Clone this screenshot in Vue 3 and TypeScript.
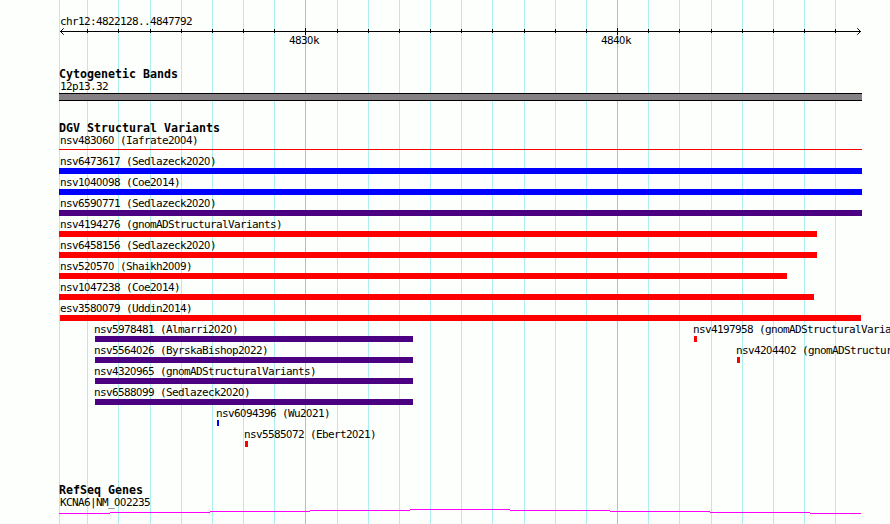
<script setup lang="ts">
interface Feature {
  label: string
  start: number
  end: number
  text: number
  kind: 'gain' | 'loss' | 'mixed' | 'thin'
}

const gridLines: number[] = [
  59, 87, 118, 150, 181, 212, 243, 274, 305, 337, 368, 399, 430, 461, 492,
  524, 555, 586, 617, 648, 679, 711, 742, 773, 804, 835,
]
const majorLines: number[] = [305, 617]
const ticks = gridLines.slice(1)

const isMajor = (x: number): boolean => majorLines.includes(x)
const tickPath = (x: number): string =>
  isMajor(x) ? `M${x + 0.5} 4v7` : `M${x + 0.5} 5v4`

const feature = (
  label: string, start: number, end: number, text: number, kind: Feature['kind'],
): Feature => ({ label, start, end, text, kind })

const rows: Feature[][] = [
  [feature('nsv483060 (Iafrate2004)', 59, 862, 60, 'thin')],
  [feature('nsv6473617 (Sedlazeck2020)', 59, 862, 60, 'gain')],
  [feature('nsv1040098 (Coe2014)', 59, 862, 60, 'gain')],
  [feature('nsv6590771 (Sedlazeck2020)', 59, 862, 60, 'mixed')],
  [feature('nsv4194276 (gnomADStructuralVariants)', 59, 817, 60, 'loss')],
  [feature('nsv6458156 (Sedlazeck2020)', 59, 817, 60, 'loss')],
  [feature('nsv520570 (Shaikh2009)', 59, 787, 60, 'loss')],
  [feature('nsv1047238 (Coe2014)', 59, 814, 60, 'loss')],
  [feature('esv3580079 (Uddin2014)', 60, 861, 60, 'loss')],
  [
    feature('nsv5978481 (Almarri2020)', 95, 413, 94, 'mixed'),
    feature('nsv4197958 (gnomADStructuralVariants)', 694, 697, 693, 'loss'),
  ],
  [
    feature('nsv5564026 (ByrskaBishop2022)', 95, 413, 94, 'mixed'),
    feature('nsv4204402 (gnomADStructuralVariants)', 737, 740, 736, 'loss'),
  ],
  [feature('nsv4320965 (gnomADStructuralVariants)', 95, 413, 94, 'mixed')],
  [feature('nsv6588099 (Sedlazeck2020)', 95, 413, 94, 'mixed')],
  [feature('nsv6094396 (Wu2021)', 217, 219, 216, 'gain')],
  [feature('nsv5585072 (Ebert2021)', 245, 248, 244, 'loss')],
]

// Zeros are set in a face without a dot or slash.
const parts = (s: string): string[] => s.split(/(0)/).filter(Boolean)
</script>

<template>
  <main class="browser">
    <svg class="grid" width="890" height="524" shape-rendering="crispEdges" aria-hidden="true">
      <rect
        v-for="x in gridLines" :key="x" :x="x" y="0" width="1" height="524"
        :class="isMajor(x) ? 'major' : 'minor'"
      />
    </svg>

    <section class="ruler">
      <div class="label">chr12:4822128..4847792</div>
      <svg class="axis" width="890" height="12" aria-hidden="true">
        <g shape-rendering="crispEdges">
          <path d="M60 7.5H861" />
          <path v-for="x in ticks" :key="x" :d="tickPath(x)" />
        </g>
        <path d="M63.7 4.3L60.5 7.5L63.7 10.7M857.3 4.3L860.5 7.5L857.3 10.7" />
      </svg>
      <div class="scale">
        <div class="label">483<span class="zero">0</span>k</div>
        <div class="label">484<span class="zero">0</span>k</div>
      </div>
    </section>

    <section class="bands">
      <h2>Cytogenetic Bands</h2>
      <div class="label">12p13.32</div>
      <div class="band"></div>
    </section>

    <section class="variants">
      <h2>DGV Structural Variants</h2>
      <div v-for="(row, r) in rows" :key="r" class="row">
        <div v-for="f in row" :key="f.label" class="feature">
          <div class="label" :style="{ marginLeft: f.text + 'px' }"><template v-for="(p, i) in parts(f.label)" :key="i"><span v-if="p === '0'" class="zero">0</span><template v-else>{{ p }}</template></template></div>
          <div
            class="bar" :class="f.kind"
            :style="{ marginLeft: f.start + 'px', width: f.end - f.start + 'px' }"
          ></div>
        </div>
      </div>
    </section>

    <section class="genes">
      <h2>RefSeq Genes</h2>
      <div class="label">KCNA6|NM_<span class="zero">0</span><span class="zero">0</span>2235</div>
      <svg class="gene" width="890" height="8" shape-rendering="crispEdges" aria-hidden="true">
        <path d="M59 5.5H110M110 4.5H210M210 3.5H310M310 2.5H410M410 1.5H510M510 2.5H610M610 3.5H710M710 4.5H810M810 5.5H861" />
      </svg>
    </section>
  </main>
</template>

<style>
body {
  margin: 0;
  background: #fdfffc;
}
</style>

<style scoped>
.browser {
  position: relative;
  width: 890px;
  height: 524px;
  overflow: hidden;
  background: #fdfffc;
  color: #000;
}

.grid {
  position: absolute;
  inset: 0;
}

.minor { fill: #afeeee; }
.major { fill: #87ceeb; }

section {
  position: relative;
  box-sizing: border-box;
}

svg { display: block; }

h2 {
  margin: 0 0 0 59px;
  height: 13px;
  font: bold 11.63px/13px "DejaVu Sans Mono", monospace;
  white-space: pre;
}

.label {
  margin-left: 60px;
  height: 13px;
  font: 11px/13px "DejaVu Sans Mono", monospace;
  letter-spacing: -0.622px;
  white-space: pre;
}

.zero {
  display: inline-block;
  width: 6px;
  height: 13px;
  vertical-align: top;
  font-family: "DejaVu Sans Condensed", "DejaVu Sans", sans-serif;
  font-stretch: condensed;
  letter-spacing: 0;
}

.ruler {
  height: 68px;
  padding-top: 15px;
}

.axis {
  margin-top: -4px;
  fill: none;
  stroke: #000;
}

.scale {
  display: grid;
  grid-template-columns: 312px 312px;
  margin: -2px 0 0 289px;
}

.scale .label { margin-left: 0; }

.bands {
  height: 54px;
}

.bands h2,
.variants h2,
.genes h2 { height: 12px; }

.band {
  width: 803px;
  height: 8px;
  margin-left: 59px;
  box-sizing: border-box;
  border: solid #000;
  border-width: 1px 0;
  background: #848084;
}

.variants { height: 362px; }

.row {
  display: grid;
  height: 21px;
}

.feature {
  grid-area: 1 / 1;
}

.bar { height: 6px; }
.gain { background: #00f; }
.loss { background: #f00; }
.mixed { background: #4b0082; }
.thin {
  height: 1px;
  margin-top: 2px;
  background: #f00;
}

.gene {
  margin-top: -1px;
  fill: none;
  stroke: #f0f;
}
</style>
